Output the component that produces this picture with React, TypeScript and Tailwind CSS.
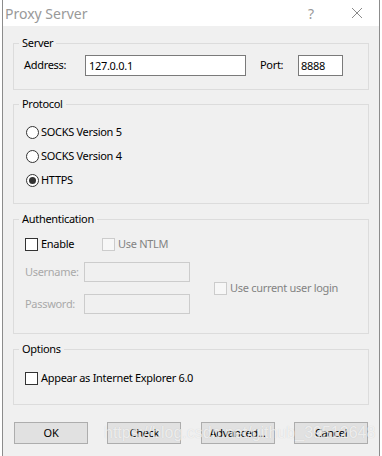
import type { ReactNode } from "react";

const font = { fontFamily: '"Noto Sans", "Open Sans", Arial, sans-serif' };

const GroupBox = ({ title, className, children }: { title: string; className: string; children: ReactNode }) => (
  <div className={`relative border border-[#dcdcdc] ${className}`}>
    {/* caption sits over the top border line */}
    <span className="absolute -top-[9px] left-[5px] bg-[#f0f0f0] px-[3px] text-[11px] tracking-[-0.3px] leading-[16px] text-black">
      {title}
    </span>
    {children}
  </div>
);

const Check = ({ label, disabled }: { label: string; disabled?: boolean }) => (
  <div className="flex items-center h-[16px]">
    <span
      className={`w-[13px] h-[13px] border ${disabled ? "border-[#cccccc] bg-[#f7f7f7]" : "border-[#333333] bg-white"}`}
    />
    <span className={`ml-[3px] text-[11px] tracking-[-0.3px] leading-[16px] ${disabled ? "text-[#838383]" : "text-black"}`}>
      {label}
    </span>
  </div>
);

const Radio = ({ label, checked }: { label: string; checked?: boolean }) => (
  <div className="flex items-center h-[24px]">
    <span className="w-[13px] h-[13px] rounded-full border border-[#333333] bg-white flex items-center justify-center">
      {checked && <span className="w-[7px] h-[7px] rounded-full bg-[#333333]" />}
    </span>
    <span className="ml-[2px] text-[11px] tracking-[-0.3px] leading-[16px] text-black">{label}</span>
  </div>
);

const Button = ({ label }: { label: string }) => (
  <div className="w-[74px] h-[22px] border border-[#adadad] bg-[#e1e1e1] flex items-center justify-center text-[11px] tracking-[-0.3px] text-black">
    {label}
  </div>
);

export default function App() {
  return (
    <div className="w-[382px] h-[456px] bg-white overflow-hidden" style={font}>
      <div className="relative ml-[2px] w-[378px] h-[456px] border-x border-[#8c8c8c] flex flex-col">
        {/* title bar */}
        <div className="h-[26px] bg-white flex items-center shrink-0">
          <span className="pl-[2px] text-[14px] text-[#999999]">Proxy Server</span>
          <span className="ml-auto mr-[37px] text-[14px] text-[#999999]">?</span>
          <svg width="12" height="12" viewBox="0 0 12 12" className="mr-[16px]">
            <path d="M1 1 L11 11 M11 1 L1 11" stroke="#8a8a8a" strokeWidth="1" />
          </svg>
        </div>

        <div className="flex-1 bg-[#f0f0f0] px-[10px] pt-[17px] flex flex-col">
          <GroupBox title="Server" className="h-[47px]">
            <div className="flex items-center pt-[11px] pl-[10px] text-[11px] tracking-[-0.3px] text-black">
              <span className="w-[61px]">Address:</span>
              <div className="w-[161px] h-[21px] border border-[#7a7a7a] bg-white pl-[3px] leading-[19px]">127.0.0.1</div>
              <span className="ml-[14px] w-[38px]">Port:</span>
              <div className="w-[45px] h-[21px] border border-[#7a7a7a] bg-white pl-[2px] leading-[19px]">8888</div>
            </div>
          </GroupBox>

          <GroupBox title="Protocol" className="mt-[14px] h-[100px]">
            <div className="pt-[15px] pl-[12px] flex flex-col">
              <Radio label="SOCKS Version 5" />
              <Radio label="SOCKS Version 4" />
              <Radio label="HTTPS" checked />
            </div>
          </GroupBox>

          <GroupBox title="Authentication" className="mt-[15px] h-[115px]">
            <div className="pt-[16px] pl-[11px]">
              <div className="flex">
                <div className="w-[77px]">
                  <Check label="Enable" />
                </div>
                <Check label="Use NTLM" disabled />
              </div>
              <div className="flex items-center mt-[10px]">
                <div className="flex flex-col gap-[12px] text-[11px] tracking-[-0.3px] text-[#a9a9a9]">
                  <div className="flex items-center">
                    <span className="w-[60px] -ml-[1px] pl-[1px]">Username:</span>
                    <div className="w-[106px] h-[20px] border border-[#cccccc] bg-[#f0f0f0]" />
                  </div>
                  <div className="flex items-center">
                    <span className="w-[60px] -ml-[1px] pl-[1px]">Password:</span>
                    <div className="w-[106px] h-[20px] border border-[#cccccc] bg-[#f0f0f0]" />
                  </div>
                </div>
                <div className="ml-[24px]">
                  <Check label="Use current user login" disabled />
                </div>
              </div>
            </div>
          </GroupBox>

          <GroupBox title="Options" className="mt-[15px] h-[56px]">
            <div className="pt-[20px] pl-[11px]">
              <Check label="Appear as Internet Explorer 6.0" />
            </div>
          </GroupBox>

          <div className="mt-[17px] px-[1px] flex justify-between">
            <Button label="OK" />
            <Button label="Check" />
            <Button label="Advanced..." />
            <Button label="Cancel" />
          </div>
        </div>

        {/* watermark over the button row */}
        <span
          className="absolute left-[101px] top-[421px] text-[16px] text-white/70 whitespace-nowrap"
          style={{ fontFamily: '"Liberation Sans", Arial, sans-serif', textShadow: "0 0 1px rgba(0,0,0,0.15)" }}
        >
          https://blog.csdn.net/github_39512648
        </span>
      </div>
    </div>
  );
}
